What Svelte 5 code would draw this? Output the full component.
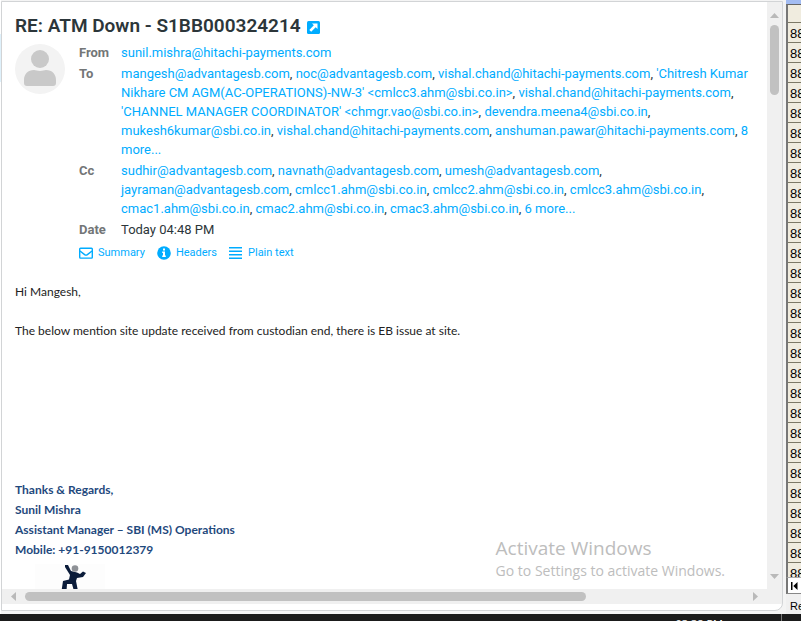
<script>
  const to = [
    'mangesh@advantagesb.com',
    'noc@advantagesb.com',
    'vishal.chand@hitachi-payments.com',
    "'Chitresh Kumar Nikhare CM AGM(AC-OPERATIONS)-NW-3' <cmlcc3.ahm@sbi.co.in>",
    'vishal.chand@hitachi-payments.com',
    "'CHANNEL MANAGER COORDINATOR' <chmgr.vao@sbi.co.in>",
    'devendra.meena4@sbi.co.in',
    'mukesh6kumar@sbi.co.in',
    'vishal.chand@hitachi-payments.com',
    'anshuman.pawar@hitachi-payments.com'
  ];
  const cc = [
    'sudhir@advantagesb.com',
    'navnath@advantagesb.com',
    'umesh@advantagesb.com',
    'jayraman@advantagesb.com',
    'cmlcc1.ahm@sbi.co.in',
    'cmlcc2.ahm@sbi.co.in',
    'cmlcc3.ahm@sbi.co.in',
    'cmac1.ahm@sbi.co.in',
    'cmac2.ahm@sbi.co.in',
    'cmac3.ahm@sbi.co.in'
  ];
  const rows = Array.from({ length: 28 }, () => '88');
</script>

{#snippet people(list, more)}
  {#each list as person}<a href="#person">{person}</a>,{' '}{/each}<a href="#more">{more} more...</a>
{/snippet}

<div class="screen">
  <div class="desk">
    <div class="list-edge"><i></i></div>
    <main class="mail">
      <div class="view">
        <article class="message">
          <h1>
            <span>RE: ATM Down - S1BB000324214</span>
            <a href="#open" aria-label="Open in new window">
              <svg width="13" height="13" viewBox="0 0 13 13">
                <rect width="13" height="13" rx="1.5" fill="#00acff" />
                <path d="M5 2.5h5.5V8L8.7 6.3 4.2 10.8 2.3 8.9 6.8 4.3z" fill="#fff" />
              </svg>
            </a>
          </h1>
          <header>
            <svg class="avatar" width="50" height="50" viewBox="0 0 50 50">
              <circle cx="25" cy="25" r="25" fill="#f3f3f3" />
              <circle cx="25" cy="15" r="9" fill="#c9c9c9" />
              <path d="M9 39v-3c0-6 4-10 10-10 2 0 3 1 6 1s4-1 6-1c6 0 10 4 10 10v3c0 2-1 3-3 3H12c-2 0-3-1-3-3z" fill="#c9c9c9" />
            </svg>
            <div class="details">
              <dl>
                <dt>From</dt>
                <dd><a href="#from">sunil.mishra@hitachi-payments.com</a></dd>
                <dt>To</dt>
                <dd>{@render people(to, 8)}</dd>
                <dt>Cc</dt>
                <dd>{@render people(cc, 6)}</dd>
                <dt>Date</dt>
                <dd>Today 04:48 PM</dd>
              </dl>
              <nav>
                <a href="#summary">
                  <svg width="14" height="14" viewBox="0 0 14 14" fill="none" stroke="#00acff" stroke-width="1.4">
                    <rect x="0.7" y="2.2" width="12.6" height="9.9" rx="0.8" />
                    <path d="M1 5l4.6 3.6q1.4 1 2.8 0L13 5" />
                  </svg>
                  Summary
                </a>
                <a href="#headers">
                  <svg width="14" height="14" viewBox="0 0 14 14">
                    <circle cx="7" cy="7" r="6.8" fill="#00acff" />
                    <path d="M6 2.6h2v2H6zM5.2 5.6H8v4h.8V11H5.2V9.600H6V7h-.8z" fill="#fff" />
                  </svg>
                  Headers
                </a>
                <a href="#plain">
                  <svg width="14" height="14" viewBox="0 0 14 14" fill="#00acff">
                    <path d="M0 1h13v1.500H0zM0 4.500h13V6H0zM0 8h13v1.500H0zM0 11.500h13V13H0z" />
                  </svg>
                  Plain text
                </a>
              </nav>
            </div>
          </header>
          <section class="body">
            <p>Hi Mangesh,</p>
            <p>The below mention site update received from custodian end, there is EB issue at site.</p>
          </section>
          <footer>
            <p>Thanks &amp; Regards,</p>
            <p>Sunil Mishra</p>
            <p>Assistant Manager – SBI (MS) Operations</p>
            <p>Mobile: +91-9150012379</p>
            <svg class="logo" width="70" height="40" viewBox="0 0 70 40">
              <rect width="70" height="40" fill="#fdfdfd" />
              <path d="M30 1L33 1L36 7L42 8.500L45 10L48 7.500L51 9L48 13L42 14L41 17L43 27L39 27L37 20L32 20L31.500 27L26.500 27L28 17L34 15.500L35 11L30 3z" fill="#0b1c3a" />
              <circle cx="40" cy="4.500" r="3.300" fill="#8e9196" />
            </svg>
          </footer>
        </article>
        <div class="vbar">
          <svg width="9" height="5" viewBox="0 0 9 5"><path d="M0 5L4.500 0 9 5z" fill="#b9b9b9" /></svg>
          <div class="track"><b></b></div>
          <svg width="9" height="5" viewBox="0 0 9 5"><path d="M0 0h9L4.500 5z" fill="#b9b9b9" /></svg>
        </div>
      </div>
      <div class="hbar">
        <svg width="5" height="9" viewBox="0 0 5 9"><path d="M5 0v9L0 4.500z" fill="#b9b9b9" /></svg>
        <div class="track"><b></b></div>
        <svg width="5" height="9" viewBox="0 0 5 9"><path d="M0 0v9l5-4.500z" fill="#b9b9b9" /></svg>
      </div>
    </main>
    <aside>
      <div class="cells">
        <div class="head"></div>
        {#each rows as value}<div class="cell">{value}</div>{/each}
      </div>
      <div class="tabs">
        <svg width="7" height="8" viewBox="0 0 7 8"><path d="M0 0h1.500v8H0zM6.500 0v8L2.300 4z" fill="#000" /></svg>
      </div>
      <div class="status">Ready</div>
    </aside>
  </div>
  <div class="taskbar"><span>03:38 PM</span><i></i></div>
  <div class="watermark">
    <strong>Activate Windows</strong>
    <span>Go to Settings to activate Windows.</span>
  </div>
</div>

<style>
  .screen {
    position: relative;
    display: flex;
    flex-direction: column;
    height: 100vh;
    overflow: hidden;
    background: #f4f4f4;
    color: #2c363a;
    font-family: Roboto, sans-serif;
    font-size: 13px;
    line-height: 19px;
  }
  .desk {
    flex: 1;
    display: flex;
    min-height: 0;
  }
  a {
    color: #00acff;
    text-decoration: none;
  }
  p {
    margin: 0;
  }
  .list-edge {
    width: 1px;
    background: #fff;
    padding-top: 34px;
  }
  .list-edge i {
    display: block;
    height: 48px;
    background: #dff1fb;
  }
  .mail {
    flex: 1;
    display: flex;
    flex-direction: column;
    min-width: 0;
    margin: 1px 3px 3px 0;
    padding-bottom: 6px;
    border: 1px solid #d2d4d6;
    border-radius: 0 0 8px 0;
    background: #fff;
    overflow: hidden;
  }
  .view {
    flex: 1;
    display: flex;
    min-height: 0;
  }
  .message {
    flex: 1;
    min-width: 0;
    padding: 12px 8px 0 13px;
    overflow: hidden;
  }
  h1 {
    display: flex;
    align-items: center;
    gap: 6px;
    margin: 0;
    font-size: 19px;
    font-weight: 600;
    line-height: 24px;
  }
  h1 a,
  h1 svg {
    display: block;
  }
  h1 a {
    padding-top: 2px;
  }
  header {
    display: flex;
    gap: 14px;
    margin-top: 5px;
  }
  .avatar {
    flex: none;
    margin-top: 1px;
  }
  .details {
    min-width: 0;
  }
  dl {
    display: grid;
    grid-template-columns: 28px 1fr;
    gap: 2px 14px;
    margin: 0;
  }
  dt {
    color: #737677;
    font-weight: 700;
  }
  dd {
    margin: 0;
  }
  nav {
    display: flex;
    gap: 12px;
    margin-top: 4px;
    font-size: 11px;
  }
  nav a {
    display: flex;
    align-items: center;
    gap: 5px;
  }
  .body,
  footer {
    font-family: Lato, "Open Sans", sans-serif;
    font-size: 12px;
    line-height: 20px;
  }
  .body {
    display: grid;
    gap: 19px;
    margin-top: 20px;
    color: #222;
  }
  footer {
    margin-top: 139px;
    color: #1f497d;
    font-weight: 700;
  }
  .logo {
    display: block;
    margin: 4px 0 0 20px;
  }
  .vbar {
    display: flex;
    flex-direction: column;
    align-items: center;
    width: 15px;
    padding: 11px 0 10px;
    box-sizing: border-box;
    background: #f0f0f0;
  }
  .vbar .track {
    flex: 1;
    padding: 7px 0;
  }
  .vbar b {
    display: block;
    width: 9px;
    height: 13%;
    border-radius: 5px;
    background: #c1c1c1;
  }
  .hbar {
    display: flex;
    align-items: center;
    height: 15px;
    padding: 0 24px 0 9px;
    background: #f0f0f0;
  }
  .hbar .track {
    flex: 1;
    padding: 0 9px;
  }
  .hbar b {
    display: block;
    width: 78%;
    height: 9px;
    border-radius: 5px;
    background: #c1c1c1;
  }
  aside {
    display: flex;
    flex-direction: column;
    width: 15px;
    border-top: 4px solid #a3bcf2;
    overflow: hidden;
    color: #000;
    font-family: "Liberation Sans", Arial, sans-serif;
    font-size: 13px;
  }
  .cells {
    flex: 1;
    min-height: 0;
    overflow: hidden;
    border-top: 1px solid #666;
    border-left: 2px solid #777;
    background: #f0ecdf;
  }
  .head {
    height: 17px;
    border-bottom: 1px solid #7c7866;
  }
  .cell {
    height: 19px;
    padding-left: 2px;
    border-bottom: 1px solid #7c7866;
    line-height: 22px;
    white-space: nowrap;
  }
  .tabs {
    display: flex;
    align-items: center;
    height: 15px;
    padding-left: 3px;
    border-top: 1px solid #aaa;
    border-left: 2px solid #777;
    border-bottom: 1px solid #888;
    background: #fff;
  }
  .status {
    height: 20px;
    padding-left: 4px;
    background: #f0f0f0;
    font-size: 11px;
    line-height: 25px;
  }
  .taskbar {
    display: flex;
    justify-content: flex-end;
    gap: 58px;
    height: 7px;
    padding-right: 19px;
    overflow: hidden;
    background: #1b1b1b;
    color: #fff;
    font-family: "Open Sans", sans-serif;
    font-size: 11px;
    line-height: 20px;
  }
  .taskbar i {
    width: 1px;
    background: #777;
  }
  .watermark {
    position: absolute;
    right: 76px;
    bottom: 40px;
    display: flex;
    flex-direction: column;
    color: #bdbdbd;
    font-family: "Open Sans", "Noto Sans", sans-serif;
    font-size: 14px;
    line-height: 20px;
  }
  .watermark strong {
    font-size: 19px;
    font-weight: 400;
    line-height: 26px;
  }
</style>
